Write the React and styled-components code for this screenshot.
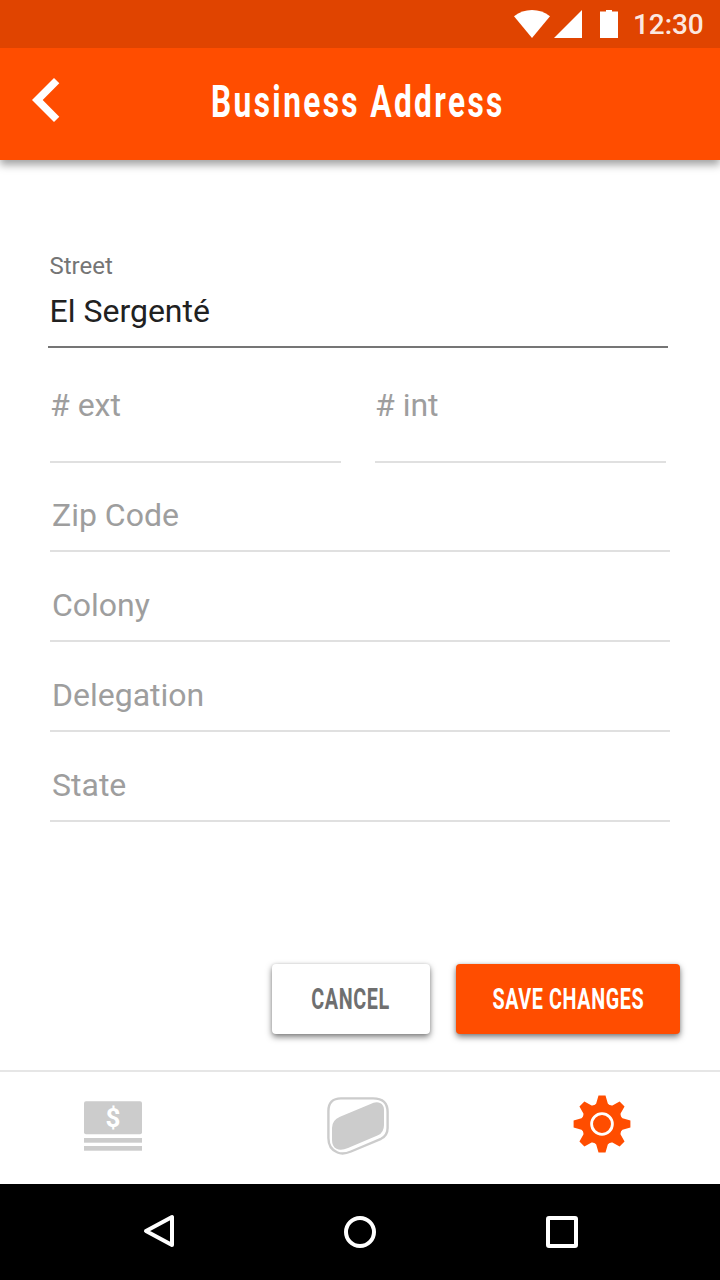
import React from "react";
import styled, { createGlobalStyle } from "styled-components";

const GlobalStyle = createGlobalStyle`
  * { box-sizing: border-box; }
  body {
    margin: 0;
    background: #fff;
    font-family: Roboto, "Liberation Sans", sans-serif;
  }
`;

const Screen = styled.div`
  width: 720px;
  height: 1280px;
  display: flex;
  flex-direction: column;
  background: #fff;
  overflow: hidden;
`;

const StatusBar = styled.div`
  height: 48px;
  flex: none;
  display: flex;
  align-items: center;
  justify-content: flex-end;
  padding-right: 16px;
  background: #e04400;
  z-index: 1;
`;

const StatusIcons = styled.svg`
  display: block;
  margin-right: 15px;
  fill: #fff;
`;

const Clock = styled.span`
  font-size: 28px;
  line-height: 46px;
  padding-top: 2px;
  width: 71px;
  white-space: nowrap;
  font-weight: 500;
  letter-spacing: -0.1px;
  color: rgba(255, 255, 255, 0.9);
`;

const Header = styled.header`
  height: 112px;
  flex: none;
  display: grid;
  grid-template-columns: 92px 1fr 97px;
  background: #ff4d00;
  box-shadow: 0 5px 8px rgba(0, 0, 0, 0.36);
`;

const BackButton = styled.button`
  border: 0;
  background: none;
  padding: 30px 0 0 32px;
  display: flex;
  align-items: flex-start;
`;

const Condensed = styled.span`
  display: inline-block;
  white-space: nowrap;
  transform: scaleX(${(p) => p.$scale});
`;

const Title = styled.h1`
  margin: 0;
  display: flex;
  justify-content: center;
  font-size: 45px;
  line-height: 108px;
  font-weight: 700;
  letter-spacing: 3.4px;
  color: #fff;
`;

const Form = styled.main`
  flex: 1;
  display: flex;
  flex-direction: column;
  padding: 90px 50px 0;
`;

const StreetField = styled.div`
  width: 620px;
  height: 98px;
  margin-left: -2px;
  padding-left: 1.5px;
  border-bottom: 2px solid #757575;
`;

const FieldLabel = styled.div`
  font-size: 24px;
  line-height: 32px;
  color: #757575;
`;

const FieldValue = styled.div`
  margin-top: 10px;
  font-size: 32px;
  line-height: 38px;
  color: #212121;
`;

const FieldRow = styled.div`
  display: grid;
  grid-template-columns: 291px 291px;
  gap: 34px;
`;

const Field = styled.div`
  height: ${(p) => p.$height}px;
  padding: ${(p) => p.$top}px 0 0 ${(p) => p.$inset}px;
  border-bottom: 2px solid #e0e0e0;
  font-size: 32px;
  line-height: 38px;
  color: #9e9e9e;
`;

const Actions = styled.div`
  display: flex;
  justify-content: flex-end;
  gap: 26px;
  margin: 142px -10px 0 0;
`;

const ActionButton = styled.button`
  width: ${(p) => (p.$primary ? 224 : 158)}px;
  height: 70px;
  padding: 0;
  display: flex;
  justify-content: center;
  align-items: center;
  border: 0;
  border-radius: 4px;
  background: ${(p) => (p.$primary ? "#ff4d00" : "#fff")};
  color: ${(p) => (p.$primary ? "#fff" : "#6f6f6f")};
  box-shadow: 0 3px 6px rgba(0, 0, 0, 0.5), 0 0 3px rgba(0, 0, 0, 0.12);
  font-family: inherit;
  font-size: 29.5px;
  line-height: 34px;
  font-weight: 700;
  letter-spacing: 0.9px;
`;

const TabBar = styled.nav`
  height: 114px;
  flex: none;
  display: flex;
  justify-content: space-between;
  align-items: flex-start;
  padding: 23px 89px 0 84px;
  border-top: 2px solid #e6e6e6;
`;

const TabIcon = styled.svg`
  display: block;
  margin-top: ${(p) => p.$top || 0}px;
`;

const SystemBar = styled.div`
  height: 96px;
  flex: none;
  display: flex;
  justify-content: space-between;
  align-items: center;
  padding: 0 140px 0 142px;
  background: #000;
`;

const SystemIcon = styled.svg`
  display: block;
  fill: none;
  stroke: #fff;
  stroke-width: 4;
  stroke-linejoin: round;
`;

const fields = ["Zip Code", "Colony", "Delegation", "State"];
const teeth = [0, 45, 90, 135, 180, 225, 270, 315];

export default function App() {
  return (
    <>
      <GlobalStyle />
      <Screen>
        <StatusBar>
          <StatusIcons width="104" height="28" viewBox="0 0 104 28">
            <path d="M0 6.2Q8 0 18 0T36 6.2L18 28Z" />
            <path d="M68 0V28H40Z" />
            <path d="M92 0h6v1.5h6V28H86V1.5h6Z" />
          </StatusIcons>
          <Clock>12:30</Clock>
        </StatusBar>
        <Header>
          <BackButton aria-label="Back">
            <svg width="28" height="44" viewBox="0 0 28 44">
              <path d="M0 22 22 0 27.3 5.3 10.7 22 27.3 38.7 22 44Z" fill="#fff" />
            </svg>
          </BackButton>
          <Title>
            <Condensed $scale={0.703}>Business Address</Condensed>
          </Title>
        </Header>
        <Form>
          <StreetField>
            <FieldLabel>Street</FieldLabel>
            <FieldValue>El Sergenté</FieldValue>
          </StreetField>
          <FieldRow>
            <Field $height={115} $top={38} $inset={0}># ext</Field>
            <Field $height={115} $top={38} $inset={0}># int</Field>
          </FieldRow>
          {fields.map((name, i) => (
            <Field key={name} $height={i ? 90 : 89} $top={i ? 34 : 33} $inset={2}>
              {name}
            </Field>
          ))}
          <Actions>
            <ActionButton>
              <Condensed $scale={0.67}>CANCEL</Condensed>
            </ActionButton>
            <ActionButton $primary>
              <Condensed $scale={0.67}>SAVE CHANGES</Condensed>
            </ActionButton>
          </Actions>
        </Form>
        <TabBar>
          <TabIcon $top={6} width="58" height="50" viewBox="0 0 58 50" fill="#ccc">
            <rect y="0.3" width="58" height="33" rx="2" />
            <rect y="37" width="58" height="4.7" />
            <rect y="45" width="58" height="4.7" />
            <text x="29" y="25.7" textAnchor="middle" fontSize="26" fontWeight="700" fill="#fff">$</text>
          </TabIcon>
          <TabIcon $top={2} width="62" height="58" viewBox="0 0 62 58">
            <path
              d="M1.4 14Q1.4 1.4 14 1.4H46Q60.6 1.4 60.6 15V31Q60.6 38.5 54 41.8L24 54.5Q16 57.8 10.5 55.5Q1.4 52 1.4 41Z"
              fill="none"
              stroke="#ccc"
              strokeWidth="2.4"
            />
            <path
              d="M5 31Q5 23 13 19.7L43 7.2Q49 4.2 53 6Q57 7.8 57 13V28Q57 35.5 51 38.3L21 51Q14 54 9.5 51.8Q5 49.5 5 43Z"
              fill="#ccc"
            />
          </TabIcon>
          <TabIcon width="58" height="58" viewBox="-29 -29 58 58" fill="#ff4d00">
            <circle r="20.5" />
            {teeth.map((angle) => (
              <path
                key={angle}
                transform={`rotate(${angle})`}
                d="M-8 -18-5.8 -20.5-3.5 -28.4H3.5L5.8 -20.5 8 -18Z"
              />
            ))}
            <circle r="10.4" stroke="#fff" strokeWidth="2.8" />
          </TabIcon>
        </TabBar>
        <SystemBar>
          <SystemIcon width="34" height="36" viewBox="0 0 34 36">
            <path d="M30 3V31L4 17Z" />
          </SystemIcon>
          <SystemIcon width="36" height="36" viewBox="0 0 36 36">
            <circle cx="18" cy="18" r="14" />
          </SystemIcon>
          <SystemIcon width="36" height="36" viewBox="0 0 36 36">
            <rect x="4" y="4" width="28" height="28" rx="1" />
          </SystemIcon>
        </SystemBar>
      </Screen>
    </>
  );
}
